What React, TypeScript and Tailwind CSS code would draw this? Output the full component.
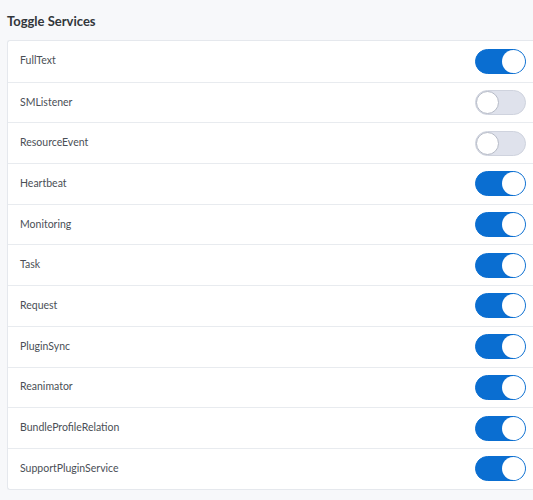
import React, { useState } from 'react';

const initial: { name: string; on: boolean }[] = [
  { name: 'FullText', on: true },
  { name: 'SMListener', on: false },
  { name: 'ResourceEvent', on: false },
  { name: 'Heartbeat', on: true },
  { name: 'Monitoring', on: true },
  { name: 'Task', on: true },
  { name: 'Request', on: true },
  { name: 'PluginSync', on: true },
  { name: 'Reanimator', on: true },
  { name: 'BundleProfileRelation', on: true },
  { name: 'SupportPluginService', on: true },
];

function Toggle({ on, onClick }: { on: boolean; onClick: () => void }) {
  return (
    <button
      onClick={onClick}
      className={`flex items-center w-[51px] h-[25px] rounded-full border p-0 ${
        on ? 'bg-[#0a6ed1] border-[#0a6ed1] justify-end' : 'bg-[#dfe2ec] border-[#cfd3de] justify-start'
      }`}
    >
      <span
        className={`block w-[23px] h-[23px] rounded-full bg-white ${
          on ? '' : 'border border-[#b5bac6]'
        }`}
      />
    </button>
  );
}

export default function App() {
  const [services, setServices] = useState(initial);

  const toggle = (i: number) => {
    setServices(services.map((s, j) => (j === i ? { ...s, on: !s.on } : s)));
  };

  return (
    <div className="min-h-[500px] bg-[#f7f8fa] pl-[7px] pt-[13px] font-['Lato','Liberation_Sans',Arial,sans-serif]">
      <h2 className="text-[13px] font-bold text-[#32363a] mb-[11px] leading-[16px]">Toggle Services</h2>
      <div className="bg-white border border-[#e5e8ed] border-r-0 rounded-l-[3px]">
        {services.map((s, i) => (
          <div
            key={s.name}
            className={`flex items-center justify-between h-[40.7px] pl-[12px] pr-[7px] ${
              i > 0 ? 'border-t border-[#e8ebef]' : ''
            }`}
          >
            <span className="text-[10.5px] text-[#4a4f56]">{s.name}</span>
            <Toggle on={s.on} onClick={() => toggle(i)} />
          </div>
        ))}
      </div>
    </div>
  );
}
